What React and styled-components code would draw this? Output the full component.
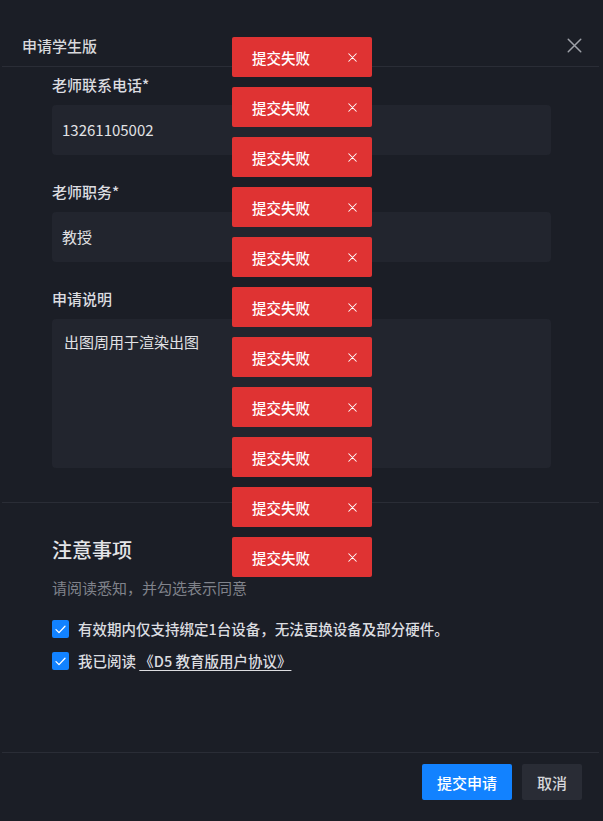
import React from "react";
import styled, { createGlobalStyle } from "styled-components";

const GlobalStyle = createGlobalStyle`
  html, body {
    margin: 0;
    padding: 0;
    background: #1b1e26;
  }
  body {
    font-family: "Noto Sans CJK SC", "Noto Sans", sans-serif;
    -webkit-font-smoothing: antialiased;
  }
`;

const Modal = styled.div`
  position: relative;
  width: 601px;
  height: 821px;
  background: #1b1e26;
  display: flex;
  flex-direction: column;
  color: #d6d7da;
`;

const Header = styled.div`
  height: 66px;
  display: flex;
  align-items: flex-end;
  justify-content: space-between;
  padding: 0 19px 9px 22px;
  box-sizing: border-box;
`;

const Title = styled.div`
  font-size: 15px;
  line-height: 22px;
  font-weight: 500;
  color: #d8d9dc;
`;

const CloseButton = styled.button`
  border: none;
  background: none;
  padding: 0;
  width: 16px;
  height: 16px;
  margin-bottom: 4px;
  color: #9ea1a8;
  display: flex;
  align-items: center;
  justify-content: center;
`;

const Divider = styled.div`
  height: 1px;
  margin: 0 2px;
  background: #2a2d36;
`;

const Form = styled.div`
  padding: 7px 50px 34px 52px;
  display: flex;
  flex-direction: column;
`;

const Label = styled.div`
  font-size: 15px;
  line-height: 22px;
  font-weight: 500;
  color: #dcdde0;
  margin-top: ${(p) => (p.$first ? "0" : "26px")};
  margin-bottom: 9px;
`;

const Field = styled.div`
  height: ${(p) => p.$height || 50}px;
  background: #22252e;
  border-radius: 4px;
  box-sizing: border-box;
  padding: ${(p) => (p.$multi ? "12px 12px" : "0 10px")};
  display: flex;
  align-items: ${(p) => (p.$multi ? "flex-start" : "center")};
  font-size: 15px;
  line-height: 22px;
  color: #e1e2e5;
`;

const Notice = styled.div`
  padding: 33px 52px 0;
  display: flex;
  flex-direction: column;
  flex: 1;
`;

const NoticeTitle = styled.div`
  font-size: 20px;
  line-height: 28px;
  color: #e4e5e8;
  font-weight: 500;
`;

const NoticeHint = styled.div`
  margin-top: 13px;
  font-size: 15px;
  line-height: 22px;
  color: #80838b;
`;

const CheckList = styled.div`
  margin-top: 19px;
  display: flex;
  flex-direction: column;
  gap: 10px;
`;

const CheckRow = styled.label`
  display: flex;
  align-items: center;
  gap: 9px;
  font-size: 14.5px;
  line-height: 22px;
  font-weight: 500;
  color: #dcdde0;
`;

const Box = styled.span`
  width: 17px;
  height: 18px;
  border-radius: 2px;
  background: #1282ff;
  display: flex;
  align-items: center;
  justify-content: center;
`;

const AgreementLink = styled.span`
  text-decoration: underline;
  text-underline-offset: 3px;
  color: #dcdde0;
`;

const Footer = styled.div`
  display: flex;
  justify-content: flex-end;
  gap: 10px;
  padding: 11px 19px 21px 0;
`;

const Button = styled.button`
  height: 36px;
  min-width: ${(p) => (p.$primary ? "90px" : "60px")};
  border: none;
  border-radius: 2px;
  font-family: inherit;
  font-size: 15px;
  font-weight: 500;
  color: ${(p) => (p.$primary ? "#ffffff" : "#d6d7da")};
  background: ${(p) => (p.$primary ? "#1282ff" : "#292c35")};
`;

const Toasts = styled.div`
  position: absolute;
  top: 37px;
  left: 232px;
  display: flex;
  flex-direction: column;
  gap: 10px;
`;

const Toast = styled.div`
  width: 140px;
  height: 40px;
  box-sizing: border-box;
  background: #df3333;
  border-radius: 2px;
  display: flex;
  align-items: center;
  justify-content: space-between;
  padding: 0 15px 0 20px;
  font-size: 14.5px;
  font-weight: 500;
  color: #ffffff;
`;

const Cross = ({ size = 12, color = "currentColor", width = 1.3 }) => (
  <svg width={size} height={size} viewBox="0 0 12 12" fill="none">
    <path d="M1 1L11 11M11 1L1 11" stroke={color} strokeWidth={width} strokeLinecap="round" />
  </svg>
);

const Check = () => (
  <svg width="11" height="9" viewBox="0 0 11 9" fill="none">
    <path d="M1 4.6L4 7.6L10 1.2" stroke="#fff" strokeWidth="1.3" strokeLinecap="round" strokeLinejoin="round" />
  </svg>
);

export default function App() {
  const toasts = Array.from({ length: 11 }, (_, i) => i);
  return (
    <>
      <GlobalStyle />
      <Modal>
        <Header>
          <Title>申请学生版</Title>
          <CloseButton>
            <Cross size={15} width={1.2} />
          </CloseButton>
        </Header>
        <Divider />
        <Form>
          <Label $first>老师联系电话*</Label>
          <Field>13261105002</Field>
          <Label>老师职务*</Label>
          <Field>教授</Field>
          <Label>申请说明</Label>
          <Field $multi $height={149}>出图周用于渲染出图</Field>
        </Form>
        <Divider />
        <Notice>
          <NoticeTitle>注意事项</NoticeTitle>
          <NoticeHint>请阅读悉知，并勾选表示同意</NoticeHint>
          <CheckList>
            <CheckRow>
              <Box><Check /></Box>
              有效期内仅支持绑定1台设备，无法更换设备及部分硬件。
            </CheckRow>
            <CheckRow>
              <Box><Check /></Box>
              <span>
                我已阅读 <AgreementLink>《D5 教育版用户协议》</AgreementLink>
              </span>
            </CheckRow>
          </CheckList>
        </Notice>
        <Divider />
        <Footer>
          <Button $primary>提交申请</Button>
          <Button>取消</Button>
        </Footer>
        <Toasts>
          {toasts.map((i) => (
            <Toast key={i}>
              提交失败
              <Cross size={9} width={1.4} />
            </Toast>
          ))}
        </Toasts>
      </Modal>
    </>
  );
}
